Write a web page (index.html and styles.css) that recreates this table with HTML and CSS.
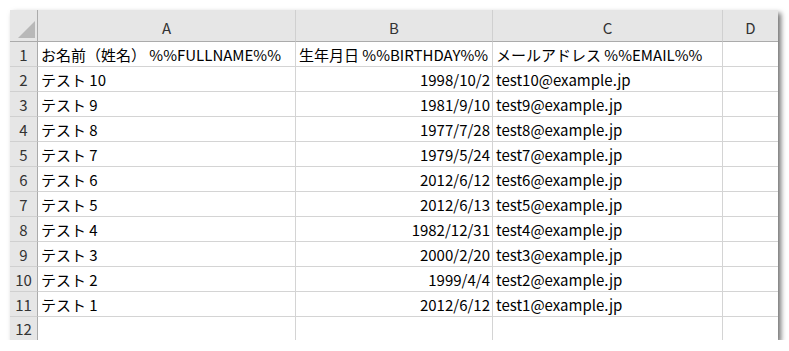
FILE: index.html
```html
<!DOCTYPE html>
<html lang="ja">
<head>
<meta charset="utf-8">
<link rel="stylesheet" href="styles.css">
</head>
<body>
<div class="sheet">
  <div class="corner"><span class="tri"></span></div>
  <div class="colh">A</div>
  <div class="colh">B</div>
  <div class="colh">C</div>
  <div class="colh">D</div>

  <div class="rowh">1</div><div class="cell">お名前（姓名） %%FULLNAME%%</div><div class="cell">生年月日 %%BIRTHDAY%%</div><div class="cell">メールアドレス %%EMAIL%%</div><div class="cell"></div>
  <div class="rowh">2</div><div class="cell">テスト 10</div><div class="cell num">1998/10/2</div><div class="cell">test10@example.jp</div><div class="cell"></div>
  <div class="rowh">3</div><div class="cell">テスト 9</div><div class="cell num">1981/9/10</div><div class="cell">test9@example.jp</div><div class="cell"></div>
  <div class="rowh">4</div><div class="cell">テスト 8</div><div class="cell num">1977/7/28</div><div class="cell">test8@example.jp</div><div class="cell"></div>
  <div class="rowh">5</div><div class="cell">テスト 7</div><div class="cell num">1979/5/24</div><div class="cell">test7@example.jp</div><div class="cell"></div>
  <div class="rowh">6</div><div class="cell">テスト 6</div><div class="cell num">2012/6/12</div><div class="cell">test6@example.jp</div><div class="cell"></div>
  <div class="rowh">7</div><div class="cell">テスト 5</div><div class="cell num">2012/6/13</div><div class="cell">test5@example.jp</div><div class="cell"></div>
  <div class="rowh">8</div><div class="cell">テスト 4</div><div class="cell num">1982/12/31</div><div class="cell">test4@example.jp</div><div class="cell"></div>
  <div class="rowh">9</div><div class="cell">テスト 3</div><div class="cell num">2000/2/20</div><div class="cell">test3@example.jp</div><div class="cell"></div>
  <div class="rowh">10</div><div class="cell">テスト 2</div><div class="cell num">1999/4/4</div><div class="cell">test2@example.jp</div><div class="cell"></div>
  <div class="rowh">11</div><div class="cell">テスト 1</div><div class="cell num">2012/6/12</div><div class="cell">test1@example.jp</div><div class="cell"></div>
  <div class="rowh">12</div><div class="cell"></div><div class="cell"></div><div class="cell"></div><div class="cell"></div>
</div>
</body>
</html>
```
FILE: styles.css
```css
html, body {
  margin: 0;
  padding: 0;
  background: #ffffff;
}
body {
  font-family: "Noto Sans CJK JP", "Noto Sans", sans-serif;
  font-size: 15px;
  color: #000;
}
.sheet {
  margin: 10px 0 0 10px;
  width: 768px;
  display: grid;
  grid-template-columns: 28px 258px 197px 230px 55px;
  grid-template-rows: 32px repeat(11, 25px) 23px;
  background: #fff;
  box-shadow: 3px 3px 5px rgba(0, 0, 0, 0.55);
}
.corner {
  background: #e6e6e6;
  border-right: 1px solid #ababab;
  border-bottom: 1px solid #ababab;
  position: relative;
}
.tri {
  position: absolute;
  right: 2px;
  bottom: 3px;
  width: 0;
  height: 0;
  border-left: 17px solid transparent;
  border-bottom: 17px solid #b8b8b8;
}
.colh {
  background: #e6e6e6;
  border-right: 1px solid #d0d0d0;
  border-bottom: 1px solid #ababab;
  color: #333;
  display: flex;
  align-items: center;
  justify-content: center;
  padding-top: 4px;
}
.colh:nth-child(5) {
  border-right: none;
}
.rowh {
  background: #e6e6e6;
  border-right: 1px solid #ababab;
  border-bottom: 1px solid #d0d0d0;
  color: #333;
  display: flex;
  align-items: center;
  justify-content: center;
}
.cell {
  border-right: 1px solid #d4d4d4;
  border-bottom: 1px solid #d4d4d4;
  display: flex;
  align-items: center;
  padding: 0 3px;
  white-space: nowrap;
  overflow: hidden;
}
.cell:nth-child(5n) {
  border-right: none;
}
.num {
  justify-content: flex-end;
  padding-right: 2px;
}
.sheet > :nth-last-child(-n+5) {
  border-bottom: none;
}
```
